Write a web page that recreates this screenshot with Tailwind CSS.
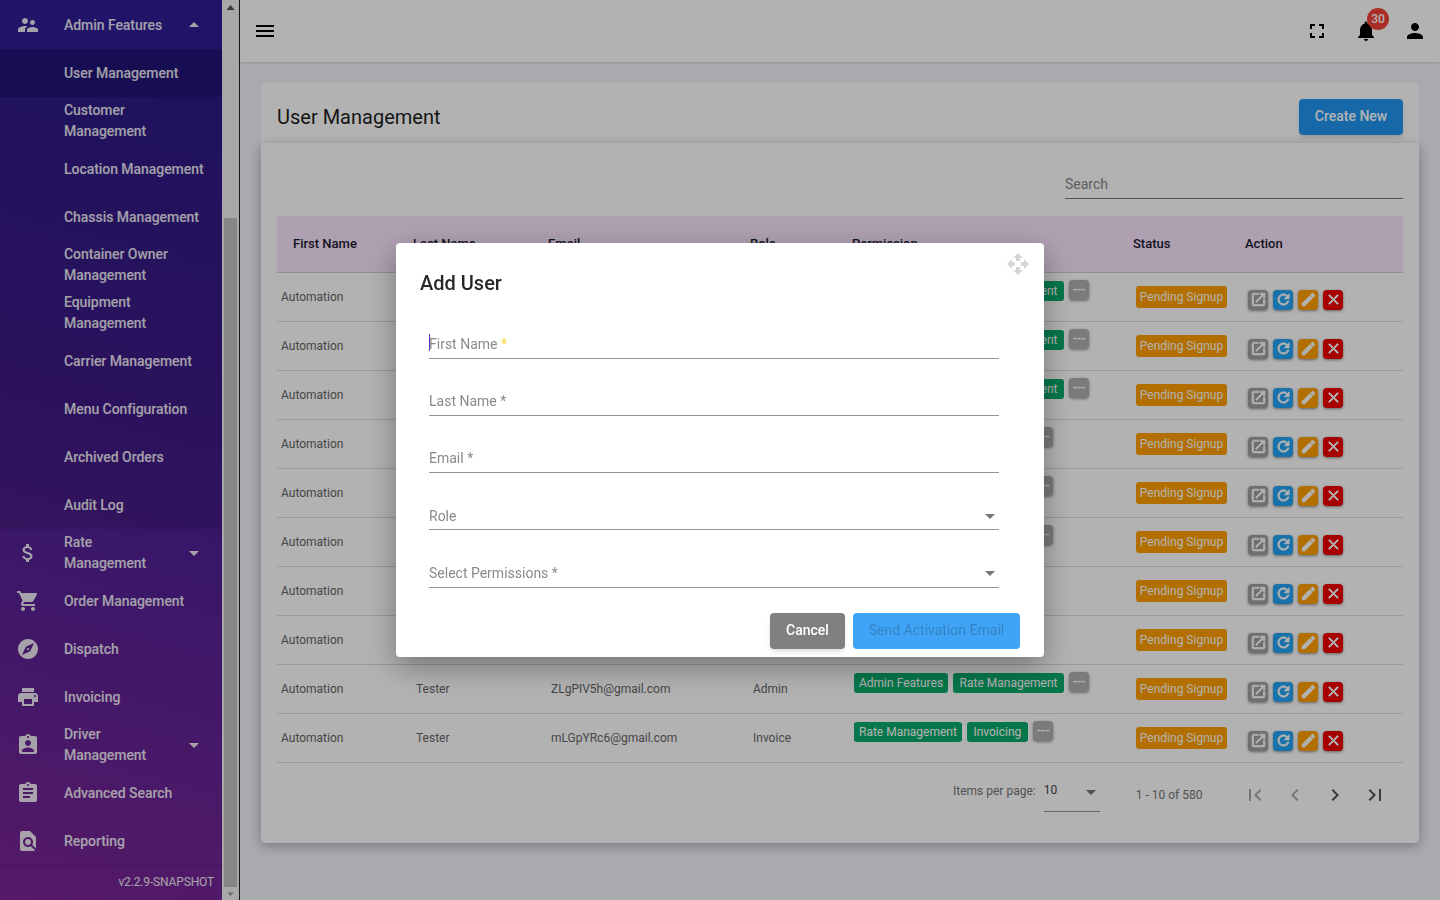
<!DOCTYPE html>
<html lang="en">

<head>
    <meta charset="UTF-8">
    <title>User Management</title>
    <script src="https://cdn.jsdelivr.net/npm/@tailwindcss/browser@4"></script>
</head>

<body class="h-[900px] w-[1440px] overflow-hidden bg-[#f1f4fa] font-['Roboto',sans-serif]">
    <div class="flex h-full">
        <!-- sidebar -->
        <aside class="flex h-full w-[240px] shrink-0 border-r border-[#222]">
            <nav class="flex h-full w-[222px] flex-col overflow-hidden bg-[linear-gradient(195deg,#2c1c96_0%,#4a1f96_50%,#7a2696_100%)] pt-px text-sm font-medium tracking-[-0.05px] text-white/90">
                <a class="flex h-12 items-center">
                    <span class="flex w-16 justify-center pr-[8px]"><svg viewBox="0 0 24 24" class="size-6 fill-current"><path d="M16.5 12c1.38 0 2.49-1.12 2.49-2.5S17.88 7 16.5 7C15.12 7 14 8.12 14 9.5s1.12 2.5 2.5 2.5zM9 11c1.66 0 2.99-1.34 2.99-3S10.66 5 9 5C7.34 5 6 6.34 6 8s1.34 3 3 3zm7.5 3c-1.83 0-5.5.92-5.5 2.75V19h11v-2.25c0-1.83-3.67-2.75-5.5-2.75zM9 13c-2.33 0-7 1.17-7 3.5V19h7v-2.25c0-.85.33-2.34 2.37-3.47C10.5 13.1 9.66 13 9 13z"/></svg></span>
                    <span class="flex-1">Admin Features</span>
                    <svg viewBox="0 0 24 24" class="mr-4 size-6 fill-current"><path d="M7 14l5-5 5 5z"/></svg>
                </a>
                <div class="bg-black/10">
                    <a class="flex h-12 items-center bg-[#1d1170]/70 pl-16">User Management</a>
                    <a class="flex h-12 items-center pl-16 leading-[21px]">Customer<br>Management</a>
                    <a class="flex h-12 items-center pl-16">Location Management</a>
                    <a class="flex h-12 items-center pl-16">Chassis Management</a>
                    <a class="flex h-12 items-center pl-16 leading-[21px]">Container Owner<br>Management</a>
                    <a class="flex h-12 items-center pl-16 leading-[21px]">Equipment<br>Management</a>
                    <a class="flex h-12 items-center pl-16">Carrier Management</a>
                    <a class="flex h-12 items-center pl-16">Menu Configuration</a>
                    <a class="flex h-12 items-center pl-16">Archived Orders</a>
                    <a class="flex h-12 items-center pl-16">Audit Log</a>
                </div>
                <a class="flex h-12 items-center leading-[21px]">
                    <span class="flex w-16 justify-center pr-[8px]"><svg viewBox="0 0 24 24" class="size-6 fill-current"><path d="M11.8 10.9c-2.27-.59-3-1.2-3-2.15 0-1.09 1.01-1.85 2.7-1.85 1.78 0 2.44.85 2.5 2.1h2.21c-.07-1.72-1.12-3.3-3.21-3.81V3h-3v2.16c-1.94.42-3.5 1.68-3.5 3.61 0 2.31 1.91 3.46 4.7 4.13 2.5.6 3 1.48 3 2.41 0 .69-.49 1.79-2.7 1.79-2.06 0-2.87-.92-2.98-2.1h-2.2c.12 2.19 1.76 3.42 3.68 3.83V21h3v-2.15c1.95-.37 3.5-1.5 3.5-3.55 0-2.84-2.43-3.81-4.7-4.4z"/></svg></span>
                    <span class="flex-1">Rate<br>Management</span>
                    <svg viewBox="0 0 24 24" class="mr-4 size-6 fill-current"><path d="M7 10l5 5 5-5z"/></svg>
                </a>
                <a class="flex h-12 items-center">
                    <span class="flex w-16 justify-center pr-[8px]"><svg viewBox="0 0 24 24" class="size-6 fill-current"><path d="M7 18c-1.1 0-1.99.9-1.99 2S5.9 22 7 22s2-.9 2-2-.9-2-2-2zM1 2v2h2l3.6 7.59-1.35 2.45c-.16.28-.25.61-.25.96 0 1.1.9 2 2 2h12v-2H7.42c-.14 0-.25-.11-.25-.25l.03-.12.9-1.63h7.45c.75 0 1.41-.41 1.75-1.03l3.58-6.49c.08-.14.12-.31.12-.48 0-.55-.45-1-1-1H5.21l-.94-2H1zm16 16c-1.1 0-1.99.9-1.99 2s.89 2 1.99 2 2-.9 2-2-.9-2-2-2z"/></svg></span>
                    Order Management
                </a>
                <a class="flex h-12 items-center">
                    <span class="flex w-16 justify-center pr-[8px]"><svg viewBox="0 0 24 24" class="size-6 fill-current"><path d="M12 10.9c-.61 0-1.1.49-1.1 1.1s.49 1.1 1.1 1.1c.61 0 1.1-.49 1.1-1.1s-.49-1.1-1.1-1.1zM12 2C6.48 2 2 6.48 2 12s4.48 10 10 10 10-4.48 10-10S17.52 2 12 2zm2.19 12.19L6 18l3.81-8.19L18 6l-3.81 8.19z"/></svg></span>
                    Dispatch
                </a>
                <a class="flex h-12 items-center">
                    <span class="flex w-16 justify-center pr-[8px]"><svg viewBox="0 0 24 24" class="size-6 fill-current"><path d="M19 8H5c-1.66 0-3 1.34-3 3v6h4v4h12v-4h4v-6c0-1.66-1.34-3-3-3zm-3 11H8v-5h8v5zm3-7c-.55 0-1-.45-1-1s.45-1 1-1 1 .45 1 1-.45 1-1 1zm-1-9H6v4h12V3z"/></svg></span>
                    Invoicing
                </a>
                <a class="flex h-12 items-center leading-[21px]">
                    <span class="flex w-16 justify-center pr-[8px]"><svg viewBox="0 0 24 24" class="size-6 fill-current"><path d="M19 3h-4.18C14.4 1.84 13.3 1 12 1c-1.3 0-2.4.84-2.82 2H5c-1.1 0-2 .9-2 2v14c0 1.1.9 2 2 2h14c1.1 0 2-.9 2-2V5c0-1.1-.9-2-2-2zm-7 0c.55 0 1 .45 1 1s-.45 1-1 1-1-.45-1-1 .45-1 1-1zm0 4c1.66 0 3 1.34 3 3s-1.34 3-3 3-3-1.34-3-3 1.34-3 3-3zm6 12H6v-1.4c0-2 4-3.1 6-3.1s6 1.1 6 3.1V19z"/></svg></span>
                    <span class="flex-1">Driver<br>Management</span>
                    <svg viewBox="0 0 24 24" class="mr-4 size-6 fill-current"><path d="M7 10l5 5 5-5z"/></svg>
                </a>
                <a class="flex h-12 items-center">
                    <span class="flex w-16 justify-center pr-[8px]"><svg viewBox="0 0 24 24" class="size-6 fill-current"><path d="M19 3h-4.18C14.4 1.84 13.3 1 12 1c-1.3 0-2.4.84-2.82 2H5c-1.1 0-2 .9-2 2v14c0 1.1.9 2 2 2h14c1.1 0 2-.9 2-2V5c0-1.1-.9-2-2-2zm-7 0c.55 0 1 .45 1 1s-.45 1-1 1-1-.45-1-1 .45-1 1-1zm2 14H7v-2h7v2zm3-4H7v-2h10v2zm0-4H7V7h10v2z"/></svg></span>
                    Advanced Search
                </a>
                <a class="flex h-12 items-center">
                    <span class="flex w-16 justify-center pr-[8px]"><svg viewBox="0 0 24 24" class="size-6 fill-current"><path d="M20 19.59V8l-6-6H6c-1.1 0-1.99.9-1.99 2L4 20c0 1.1.89 2 1.99 2H18c.45 0 .85-.15 1.19-.4l-4.43-4.43c-.8.52-1.74.83-2.76.83-2.76 0-5-2.24-5-5s2.24-5 5-5 5 2.24 5 5c0 1.02-.31 1.96-.83 2.75L20 19.59zM9 13c0 1.66 1.34 3 3 3s3-1.34 3-3-1.34-3-3-3-3 1.34-3 3z"/></svg></span>
                    Reporting
                </a>
                <div class="flex h-[33px] items-center justify-end border-t border-black/15 pr-2 text-xs font-normal tracking-[-0.15px]">v2.2.9-SNAPSHOT</div>
            </nav>
            <!-- scrollbar -->
            <div class="flex w-[17px] flex-col bg-[#f1f1f1]">
                <svg viewBox="0 0 17 17" class="size-[17px] fill-[#505050]"><path d="M8.5 5l4 5h-8z"/></svg>
                <div class="mx-0.5 mt-[201px] h-[669px] bg-[#c1c1c1]"></div>
                <svg viewBox="0 0 17 17" class="mt-auto size-[13px] self-center fill-[#a0a0a0]"><path d="M8.5 12l4-5h-8z"/></svg>
            </div>
        </aside>

        <div class="flex h-full flex-1 flex-col">
            <!-- top bar -->
            <header class="flex h-[62px] shrink-0 items-center bg-white pl-[13px] shadow-sm">
                <svg viewBox="0 0 24 24" class="size-6 fill-black"><path d="M3 18h18v-2H3v2zm0-5h18v-2H3v2zm0-7v2h18V6H3z"/></svg>
                <svg viewBox="0 0 24 24" class="ml-auto mr-[25px] size-6 fill-black"><path d="M7 14H5v5h5v-2H7v-3zm-2-4h2V7h3V5H5v5zm12 7h-3v2h5v-5h-2v3zM14 5v2h3v3h2V5h-5z"/></svg>
                <div class="relative mr-[25px]">
                    <svg viewBox="0 0 24 24" class="size-6 fill-black"><path d="M12 22c1.1 0 2-.9 2-2h-4c0 1.1.89 2 2 2zm6-6v-5c0-3.07-1.64-5.64-4.5-6.32V4c0-.83-.67-1.5-1.5-1.5s-1.5.67-1.5 1.5v.68C7.63 5.36 6 7.92 6 11v5l-2 2v1h16v-1l-2-2z"/></svg>
                    <span class="absolute -right-[11px] -top-[11px] flex size-[22px] items-center justify-center rounded-full bg-[#f44336] text-xs font-medium text-white">30</span>
                </div>
                <svg viewBox="0 0 24 24" class="mr-[13px] size-6 fill-black"><path d="M12 12c2.21 0 4-1.79 4-4s-1.79-4-4-4-4 1.79-4 4 1.79 4 4 4zm0 2c-2.67 0-8 1.34-8 4v2h16v-2c0-2.66-5.33-4-8-4z"/></svg>
            </header>

            <main class="flex-1 px-[21px] pt-[21px]">
                <div class="flex h-[60px] items-center justify-between rounded-t bg-white pl-4 pr-4 pt-[9px]">
                    <h1 class="pb-[2px] text-xl leading-none text-black/90">User Management</h1>
                    <button class="-mt-px h-9 w-[104px] rounded bg-[#2196f3] pb-[2px] text-sm font-medium text-white shadow-md">Create New</button>
                </div>
                <section class="h-[700px] rounded-b bg-white px-4 shadow-[0_3px_12px_rgba(0,0,0,0.3)]">
                    <div class="flex h-[73px] justify-end">
                        <div class="mt-[26px] h-[30px] w-[338px] border-b border-[#777] pt-[5px] text-sm text-[#858585]">Search</div>
                    </div>
                    <table class="w-[1126px] table-fixed border-collapse">
                        <thead>
                            <tr class="h-[56px] border-b border-[#d8c4dc] bg-[#f9e5fc] text-left text-[13px] text-[#1a1a2e]">
                                <th class="w-[135px] pl-4 font-medium">First Name</th>
                                <th class="w-[135px] pl-px font-medium">Last Name</th>
                                <th class="w-[202px] pl-px font-medium">Email</th>
                                <th class="w-[102px] pl-px font-medium">Role</th>
                                <th class="w-[281px] pl-px font-medium">Permission</th>
                                <th class="w-[112px] pl-px font-medium">Status</th>
                                <th class="w-[159px] pl-px font-medium">Action</th>
                            </tr>
                        </thead>
                        <tbody id="rows"></tbody>
                    </table>
                    <div class="flex h-[80px] items-start text-xs text-[#757575]">
                        <span class="ml-[676px] mt-[20px]">Items per page:</span>
                        <div class="relative ml-2 mt-[19px] h-[30px] w-14 border-b border-[#999] text-[#444]">10
                            <svg viewBox="0 0 24 24" class="absolute -top-[2px] right-[-3px] size-6 fill-[#757575]"><path d="M7 10l5 5 5-5z"/></svg>
                        </div>
                        <span class="ml-9 mt-[24px]">1 - 10 of 580</span>
                        <div class="ml-[41px] mt-[20px] flex gap-4">
                            <svg viewBox="0 0 24 24" class="size-6 fill-[#aaa]"><path d="M18.41 16.59L13.82 12l4.59-4.59L17 6l-6 6 6 6zM6 6h2v12H6z"/></svg>
                            <svg viewBox="0 0 24 24" class="size-6 fill-[#aaa]"><path d="M15.41 7.41L14 6l-6 6 6 6 1.41-1.41L10.83 12z"/></svg>
                            <svg viewBox="0 0 24 24" class="size-6 fill-[#555]"><path d="M10 6L8.59 7.41 13.17 12l-4.58 4.59L10 18l6-6z"/></svg>
                            <svg viewBox="0 0 24 24" class="size-6 fill-[#555]"><path d="M5.59 7.41L10.18 12l-4.59 4.59L7 18l6-6-6-6zM16 6h2v12h-2z"/></svg>
                        </div>
                    </div>
                </section>
            </main>
        </div>
    </div>

    <!-- backdrop + dialog -->
    <div class="fixed inset-0 flex items-center justify-center bg-black/30">
        <div class="relative h-[414px] w-[648px] rounded bg-white pl-6 pr-6 shadow-[0_10px_30px_rgba(0,0,0,0.35)]">
            <svg viewBox="0 0 24 24" class="absolute right-[14px] top-[9px] size-6 fill-[#d6d6d6]"><path d="M10 9h4V6h3l-5-5-5 5h3v3zm-1 1H6V7l-5 5 5 5v-3h3v-4zm14 2l-5-5v3h-3v4h3v3l5-5zm-9 3h-4v3H7l5 5 5-5h-3v-3z"/></svg>
            <h2 class="pt-[28px] text-xl font-medium leading-6 text-black/85">Add User</h2>
            <form class="ml-[9px] mt-[7px] w-[570px] text-sm text-[#8a8a8a]">
                <div class="flex h-[57px] items-end border-b border-[#949494] pb-1">
                    <span class="relative">
                        <span class="absolute left-0 top-0 h-[17px] w-px bg-[#5b2fc0]"></span>First Name <span class="text-[#fdd835]">*</span>
                    </span>
                </div>
                <div class="flex h-[57px] items-end border-b border-[#949494] pb-1">Last Name *</div>
                <div class="flex h-[57px] items-end border-b border-[#949494] pb-1">Email *</div>
                <div class="relative flex h-[57px] items-end border-b border-[#949494] pb-[3px]">Role
                    <svg viewBox="0 0 24 24" class="absolute bottom-px right-[-3px] size-6 fill-[#757575]"><path d="M7 10l5 5 5-5z"/></svg>
                </div>
                <div class="relative flex h-[58px] items-end border-b border-[#949494] pb-1">Select Permissions *
                    <svg viewBox="0 0 24 24" class="absolute bottom-[2px] right-[-3px] size-6 fill-[#757575]"><path d="M7 10l5 5 5-5z"/></svg>
                </div>
            </form>
            <div class="mt-[25px] flex justify-end gap-2">
                <button class="h-9 w-[75px] rounded bg-[#808080] pb-[2px] text-sm font-medium text-white shadow-md">Cancel</button>
                <button class="h-9 w-[167px] rounded bg-[#3fa4f5] pb-[2px] text-sm font-normal text-black/20">Send Activation Email</button>
            </div>
        </div>
    </div>

    <script>
        const icons = {
            open: "M19 19H5V5h7V3H5c-1.11 0-2 .9-2 2v14c0 1.1.89 2 2 2h14c1.1 0 2-.9 2-2v-7h-2v7zM14 3v2h3.59l-9.83 9.83 1.41 1.41L19 6.41V10h2V3h-7z",
            refresh: "M17.65 6.35C16.2 4.9 14.21 4 12 4c-4.42 0-7.99 3.58-7.99 8s3.57 8 7.99 8c3.73 0 6.84-2.55 7.73-6h-2.08c-.82 2.33-3.04 4-5.65 4-3.31 0-6-2.69-6-6s2.69-6 6-6c1.66 0 3.14.69 4.22 1.78L13 11h7V4l-2.35 2.35z",
            edit: "M3 17.25V21h3.75L17.81 9.94l-3.75-3.75L3 17.25zM20.71 7.04c.39-.39.39-1.02 0-1.41l-2.34-2.34c-.39-.39-1.02-.39-1.41 0l-1.83 1.83 3.75 3.75 1.83-1.83z",
            close: "M19 6.41L17.59 5 12 10.59 6.41 5 5 6.41 10.59 12 5 17.59 6.41 19 12 13.41 17.59 19 19 17.59 13.41 12z"
        };

        const adminRate = ["Admin Features", "Rate Management"];
        const rateInv = ["Rate Management", "Invoicing"];
        const rows = [
            { perms: adminRate }, { perms: adminRate }, { perms: adminRate },
            { perms: rateInv }, { perms: rateInv }, { perms: rateInv },
            { perms: [] }, { perms: [] },
            { last: "Tester", email: "ZLgPIV5h@gmail.com", role: "Admin", perms: adminRate },
            { last: "Tester", email: "mLGpYRc6@gmail.com", role: "Invoice", perms: rateInv }
        ];

        const action = (color, d) => `<span class="flex size-5 items-center justify-center rounded ${color} shadow-[0_1px_3px_rgba(0,0,0,0.45)]"><svg viewBox="0 0 24 24" class="size-[17px] fill-white stroke-white stroke-[1px]"><path d="${d}"/></svg></span>`;

        document.getElementById("rows").innerHTML = rows.map(r => `
            <tr class="h-[49px] border-b border-[#dcdcdc] text-xs text-[#666]">
                <td class="pl-1">Automation</td>
                <td class="pl-1">${r.last || ""}</td>
                <td class="pl-1">${r.email || ""}</td>
                <td class="pl-1">${r.role || ""}</td>
                <td class="pl-[3px] pt-2 align-top">
                    <div class="flex items-start gap-[5px]">
                        ${r.perms.map((p, i) => `<span class="flex h-5 items-center rounded-[3px] bg-[#0aab6b] text-white ${i ? "px-[6.5px]" : "px-[5px]"}">${p}</span>`).join("")}
                        ${r.perms.length ? `<span class="-mt-px flex h-5 w-5 items-center justify-center rounded bg-[#b0b0b0] font-bold leading-none tracking-[-0.5px] text-white shadow-[0_1px_3px_rgba(0,0,0,0.4)]">---</span>` : ""}
                    </div>
                </td>
                <td class="pl-1"><span class="flex h-[22px] w-[91px] items-center justify-center rounded-[3px] bg-[#ffa000] text-white">Pending Signup</span></td>
                <td class="pl-1 pt-[17px] align-top">
                    <div class="flex gap-[5px]">
                        ${action("bg-[#a0a0a0]", icons.open)}${action("bg-[#26a4f5]", icons.refresh)}${action("bg-[#ffa000]", icons.edit)}${action("bg-[#f00000]", icons.close)}
                    </div>
                </td>
            </tr>`).join("");
    </script>
</body>

</html>
